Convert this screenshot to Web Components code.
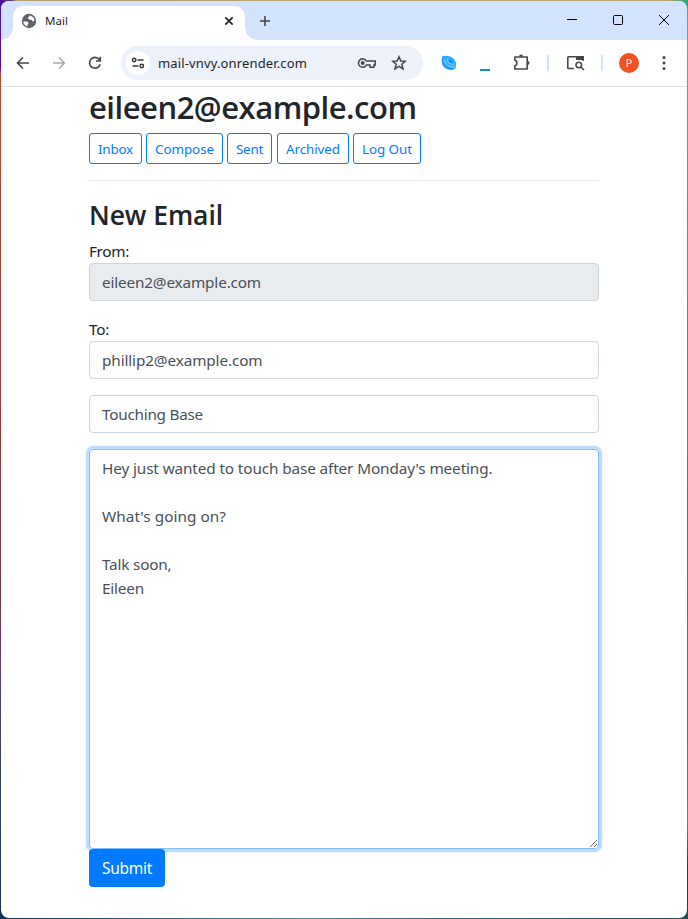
<!DOCTYPE html>
<html lang="en">
<head>
<meta charset="utf-8">
<title>Mail</title>
<style>
html,body{margin:0;height:100%;overflow:hidden}
body{box-sizing:border-box;padding:1px;background:linear-gradient(90deg,#4b1095 0,#6b3b83 12px,#b6a06c 16px,#b9a36f 97%,#2aa877 100%) 0 0/100% 8px no-repeat,linear-gradient(90deg,#12325c,#1f6474 20%,#53888a 45%,#287080 60%,#234f50) 0 100%/100% 8px no-repeat,linear-gradient(#51109b 0,#51109b 68px,#b34e38 74px,#a33a3c 40%,#703a55 65%,#2b456d 88%,#173052) 0 0/8px 100% no-repeat,linear-gradient(#22bb88 0,#7aa46a 30px,#6f9955 20%,#557755 65%,#8e7044 90%,#303d38 94%) 100% 0/8px 100% no-repeat;font-family:"Noto Sans","Open Sans",sans-serif}
</style>
</head>
<body>
<browser-window>
  <tab-strip slot="tabs"><fit-text width="23">Mail</fit-text></tab-strip>
  <tool-bar slot="tools"><fit-text width="149">mail-vnvy.onrender.com</fit-text></tool-bar>
  <mail-compose></mail-compose>
</browser-window>
<script>
function define(name, html, ready){
  const t = document.createElement('template');
  t.innerHTML = html;
  customElements.define(name, class extends HTMLElement{
    constructor(){ super(); this.attachShadow({mode:'open'}).append(t.content.cloneNode(true)); }
    connectedCallback(){ if(ready) ready(this); }
  });
}

define('browser-window', `<style>
:host{display:flex;flex-direction:column;box-sizing:border-box;height:917px;width:686px;border-radius:8px;overflow:hidden;background:#fff}
</style><slot name="tabs"></slot><slot name="tools"></slot><slot></slot>`);

define('tab-strip', `<style>
:host{display:flex;height:39px;background:#d3e2fd;box-sizing:border-box;padding:5px 0 0 12px;color:#1f1f1f;font-size:11.5px}
.tab{position:relative;display:flex;align-items:center;width:232px;height:34px;border-radius:10px 10px 0 0;background:#fff;padding:0 0 5px 8px;box-sizing:border-box}
.tab::before,.tab::after{content:"";position:absolute;bottom:0;width:12px;height:12px}
.tab::before{left:-12px;background:radial-gradient(circle at 0 0,transparent 11.5px,#fff 12px)}
.tab::after{right:-12px;background:radial-gradient(circle at 100% 0,transparent 11.5px,#fff 12px)}
.title{margin-left:8px;flex:1}
svg{display:block;flex:none}.x{margin-right:10px}
.plus{margin:8px 0 0 13px}.win{display:flex;margin:6px 15px 0 auto;gap:30px}
</style>
<div class="tab"><svg width="16" height="16" viewBox="0 0 16 16"><circle cx="8" cy="8" r="7.2" fill="#5f6368"/><path d="M2.3 8.4H5.4C7 8.4 7.6 9.2 7.4 10.6L6.6 11.6V13.4C4.2 12.8 2.4 10.9 2.3 8.4ZM8.2 2.5C11 2.6 13.4 4.8 13.6 7.3L12.2 8.5 11.3 8.3 10.9 7H8.7L8.2 5.9 6.9 5.8 6.8 4.6 8.1 4Z" fill="#fff"/></svg>
<span class="title"><slot></slot></span>
<svg class="x" width="12" height="12" viewBox="0 0 12 12"><path d="M2.3 2.3 9.7 9.7M9.7 2.3 2.3 9.7" stroke="#202124" stroke-width="1.7"/></svg></div>
<svg class="plus" width="14" height="14" viewBox="0 0 14 14"><path d="M7 2V12M2 7H12" stroke="#454746" stroke-width="1.6"/></svg>
<div class="win"><svg width="16" height="16" viewBox="0 0 16 16"><path d="M3 7.5H13" stroke="#000"/></svg><svg width="16" height="16" viewBox="0 0 16 16"><rect x="3.5" y="3.5" width="9" height="9" rx="1" fill="none" stroke="#000"/></svg><svg width="16" height="16" viewBox="0 0 16 16"><path d="M3 3 13 13M13 3 3 13" stroke="#000"/></svg></div>`);

define('tool-bar', `<style>
:host{display:flex;align-items:center;height:47px;box-sizing:border-box;border-bottom:1px solid #e0e0e0;padding:0 14px 0 14px;color:#1f1f1f;font-size:13px}
svg{display:block;flex:none}
.nav{display:flex;gap:20px}
.url{display:flex;align-items:center;width:302px;flex:none;height:34px;border-radius:17px;background:#ecf1fa;margin-left:18px;box-sizing:border-box;padding:0 16px 0 5px}
.site{width:24px;height:24px;border-radius:50%;background:#fff;display:grid;place-items:center;margin-right:8px}
.text{flex:1}.url svg+svg{margin-left:14px}
.right{display:flex;align-items:center;margin-left:18px;flex:none}
.line{width:10px;height:2px;background:#1684fb;margin:13px 0 0 23px}
.sep{width:2px;height:16px;background:#d3e2fd}
.p{width:20px;height:20px;border-radius:50%;background:#f4511e;color:#fff;font-size:10.5px;line-height:20px;text-align:center;margin:0 16px 0 16px}
</style>
<div class="nav">
<svg width="16" height="16" viewBox="0 0 16 16"><path d="M14 8H3M8 2.5 2.5 8 8 13.5" fill="none" stroke="#454746" stroke-width="1.6"/></svg>
<svg width="16" height="16" viewBox="0 0 16 16"><path d="M2 8H13M8 2.5 13.5 8 8 13.5" fill="none" stroke="#aaa" stroke-width="1.5"/></svg>
<svg width="16" height="16" viewBox="0 0 16 16"><path d="M13.2 9.2A5.4 5.4 0 1 1 12.3 4.5L13 5.5M13.3 1.8V6H9" fill="none" stroke="#454746" stroke-width="1.6"/></svg></div>
<div class="url"><span class="site"><svg width="14" height="14" viewBox="0 0 14 14"><g fill="none" stroke="#333638" stroke-width="1.5"><circle cx="3.2" cy="4" r="1.7"/><path d="M6.5 4H12.5M1.5 10H7.5"/><circle cx="10.8" cy="10" r="1.7"/></g></svg></span><span class="text"><slot></slot></span>
<svg width="20" height="16" viewBox="0 0 20 16"><path d="M9.3 6A4.2 4.2 0 1 0 9.3 10.1H13V12.2H17V10.1H18.2V6Z" fill="none" stroke="#454746" stroke-width="1.5"/><circle cx="5.7" cy="8" r="1.9" fill="#454746"/></svg>
<svg width="16" height="16" viewBox="0 0 16 16"><path d="M8 1.8 9.8 6 14.3 6.3 10.8 9.3 12 13.8 8 11.4 4 13.8 5.2 9.3 1.7 6.3 6.2 6Z" fill="none" stroke="#454746" stroke-width="1.5"/></svg></div>
<div class="right">
<svg width="16" height="16" viewBox="0 0 16 16"><path d="M1 1.2 5 .8C11 1 15 5 15 9L14.6 13.5 10.5 15C5 15 .8 11.5 .8 7Z" fill="#27adff"/><path d="M3.5 4.5C4 10 8 12.5 14 11.8M7 3.5C6 7.6 9 10 13 9" fill="none" stroke="#c2e9ff" stroke-width=".7"/><path d="M1.3 4C1.2 9 6 13.6 12 14.2" fill="none" stroke="#1c86f2" stroke-width="1"/><ellipse cx="9.5" cy="6.3" rx="2.6" ry="1.3" transform="rotate(38 9.5 6.3)" fill="#088bee"/></svg>
<span class="line"></span>
<svg style="margin-left:22px" width="20" height="20" viewBox="0 0 20 20"><path d="M2.8 4H15.2V16H2.8V12.7C5.5 12.5 5.5 7.5 2.8 7.3Z" fill="none" stroke="#454746" stroke-width="1.6" stroke-linejoin="round"/><path d="M7 3.5A2 2 0 0 1 11 3.5ZM15.5 8A2 2 0 0 1 15.5 12Z" fill="#454746"/></svg>
<span class="sep" style="margin-left:15px"></span>
<svg style="margin-left:16px" width="22" height="18" viewBox="0 0 22 18"><path d="M9 14.5H3.5Q2.8 14.5 2.8 13.8V3.5Q2.8 2.8 3.5 2.8H18V7" fill="none" stroke="#454746" stroke-width="1.6"/><path d="M11 2H18.8V6H11Z" fill="#454746"/><circle cx="13.8" cy="11" r="2.8" fill="#fff" stroke="#454746" stroke-width="1.6"/><path d="M15.8 13 19 16" stroke="#454746" stroke-width="1.7"/></svg>
<span class="sep" style="margin-left:14px"></span>
<span class="p">P</span>
<svg width="18" height="18" viewBox="0 0 18 18"><g fill="#454746"><circle cx="9" cy="3.5" r="1.5"/><circle cx="9" cy="9" r="1.5"/><circle cx="9" cy="14.5" r="1.5"/></g></svg>
</div>`);

define('nav-button', `<style>
:host{display:block;box-sizing:border-box;height:31px;border:1px solid #007bff;border-radius:3px;color:#007bff;font-size:13.4px;line-height:30px;padding:0 8px}</style><slot></slot>`);

define('form-field', `<style>
:host{display:block;margin-bottom:16px;color:#212529;font-size:15.3px;line-height:24px}
.box{box-sizing:border-box;height:38px;border:1px solid #ced4da;border-radius:4px;padding:6px 12px;color:#495057}
:host([disabled]) .box{background:#e9ecef}
</style><slot name="label"></slot><div class="box"><slot></slot></div>`);

define('message-area', `<style>
:host{position:relative;display:block;box-sizing:border-box;height:400px;border:1px solid #80bdff;border-radius:4px;box-shadow:0 0 0 3.2px rgba(0,123,255,.25);padding:6px 12px;color:#495057;font-size:15.3px;line-height:24px}
svg{position:absolute;right:0;bottom:0}
</style><slot></slot><svg width="9" height="9" viewBox="0 0 9 9"><path d="M1 8 8 1M5 8 8 5" stroke="#555" stroke-width=".9"/></svg>`);

define('submit-button', `<style>
:host{position:relative;display:block;box-sizing:border-box;width:76px;height:38px;border-radius:4px;background:#007bff;color:#fff;font-size:15.5px;line-height:39px;padding:0 13px}</style><slot></slot>`);

define('mail-compose', `<style>
:host{display:block;margin-left:88px;width:510px}
h2,h3{margin:0 0 8px;font-family:"Open Sans","Noto Sans",sans-serif;font-weight:600;color:#212529;box-sizing:border-box}
h2{font-size:31px;line-height:38.4px;height:38.4px;padding-top:1px}h3{font-size:26.5px;line-height:33.6px;height:33.6px;padding-top:2px}
nav{display:flex;gap:4px}nav :nth-child(4){margin-left:1px}
hr{margin:16px 0;border:0;border-top:1px solid #e5e5e5}
.line{height:24px}
</style>
<h2><fit-text width="327.5">eileen2@example.com</fit-text></h2>
<nav><nav-button><fit-text width="35">Inbox</fit-text></nav-button><nav-button><fit-text width="59">Compose</fit-text></nav-button><nav-button><fit-text width="27">Sent</fit-text></nav-button><nav-button><fit-text width="54">Archived</fit-text></nav-button><nav-button><fit-text width="50">Log Out</fit-text></nav-button></nav>
<hr>
<h3><fit-text width="134">New Email</fit-text></h3>
<form-field disabled><fit-text slot="label" width="40">From:</fit-text><fit-text width="159">eileen2@example.com</fit-text></form-field>
<form-field><fit-text slot="label" width="20">To:</fit-text><fit-text width="160.5">phillip2@example.com</fit-text></form-field>
<form-field><fit-text width="101">Touching Base</fit-text></form-field>
<message-area>
<div class="line"><fit-text width="390.5">Hey just wanted to touch base after Monday's meeting.</fit-text></div><div class="line"></div>
<div class="line"><fit-text width="124">What's going on?</fit-text></div><div class="line"></div>
<div class="line"><fit-text width="69.5">Talk soon,</fit-text></div>
<div class="line"><fit-text width="42">Eileen</fit-text></div>
</message-area>
<submit-button><fit-text width="50">Submit</fit-text></submit-button>`);

// Spaces its letters so that the line takes the width given in the attribute.
// Defined last: the fonts of the elements around it must be in place when it measures.
define('fit-text', `<style>:host{display:inline-block;white-space:nowrap}span{display:inline-block}</style><span><slot></slot></span>`, el => {
  const s = el.shadowRoot.querySelector('span');
  const n = el.textContent.length, want = +el.getAttribute('width');
  el.style.width = want + 'px';
  const w = s.getBoundingClientRect().width;
  if(w) s.style.letterSpacing = ((want - w) / n).toFixed(3) + 'px';
});
</script>
</body>
</html>
